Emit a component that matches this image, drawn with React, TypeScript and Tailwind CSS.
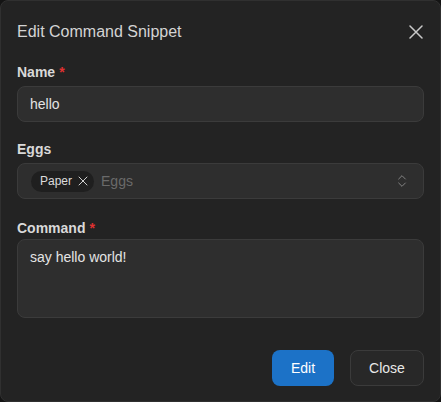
import * as React from "react";
import { X, ChevronsUpDown } from "lucide-react";

const font = { fontFamily: '"Liberation Sans", Arial, sans-serif' };

function Label({ text, required }: { text: string; required?: boolean }) {
  return (
    <label className="block text-[14px] font-bold leading-[18px] text-[#d9d9d9]">
      {text}
      {required && <span className="ml-1 text-[#e03131]">*</span>}
    </label>
  );
}

// thin close glyph used in the header
function CloseIcon() {
  return (
    <svg width="14" height="14" viewBox="0 0 14 14" fill="none" stroke="currentColor" strokeWidth="1.5" strokeLinecap="round">
      <path d="M1 1L13 13M13 1L1 13" />
    </svg>
  );
}

export default function App() {
  const [name, setName] = React.useState("hello");
  const [command, setCommand] = React.useState("say hello world!");
  const [eggs, setEggs] = React.useState<string[]>(["Paper"]);

  return (
    <div className="h-[402px] w-[441px] bg-[#141414]" style={font}>
      <div className="flex h-full w-full flex-col rounded-lg border border-[#303030] bg-[#232323] px-4">
        {/* header */}
        <div className="flex h-[62px] items-center justify-between">
          <h2 className="text-[16px] leading-5 text-[#d4d4d4]">Edit Command Snippet</h2>
          <button className="mr-[1px] text-[#c9c9c9]">
            <CloseIcon />
          </button>
        </div>

        <div className="flex flex-col">
          <div className="flex flex-col gap-[5px]">
            <Label text="Name" required />
            <input
              value={name}
              onChange={(e) => setName(e.target.value)}
              className="h-[36px] w-full rounded-lg border border-[#3b3b3b] bg-[#2e2e2e] px-3 text-[14px] text-[#e4e4e4] outline-none"
            />
          </div>

          <div className="mt-[18px] flex flex-col gap-[5px]">
            <Label text="Eggs" />
            <div className="flex h-[36px] w-full items-center rounded-lg border border-[#3b3b3b] bg-[#2e2e2e] pl-[13px] pr-[12px]">
              <div className="flex items-center gap-[7px]">
                {eggs.map((egg) => (
                  <span
                    key={egg}
                    className="flex h-[21px] items-center gap-[3px] rounded-full bg-[#1f1f1f] pl-[9px] pr-[3px] text-[12px] text-[#dcdcdc]"
                  >
                    {egg}
                    <button className="text-[#d0d0d0]" onClick={() => setEggs(eggs.filter((e) => e !== egg))}>
                      <X className="h-[16px] w-[16px]" strokeWidth={1.5} />
                    </button>
                  </span>
                ))}
                <span className="text-[14px] text-[#6a6a6a]">Eggs</span>
              </div>
              <ChevronsUpDown className="ml-auto mr-[1px] h-[16px] w-[16px] text-[#8a8a8a]" strokeWidth={1.4} />
            </div>
          </div>

          <div className="mt-[20px] flex flex-col gap-[2px]">
            <Label text="Command" required />
            <textarea
              value={command}
              onChange={(e) => setCommand(e.target.value)}
              className="block h-[79px] w-full resize-none rounded-lg border border-[#3b3b3b] bg-[#2e2e2e] px-3 py-[7px] text-[14px] leading-5 text-[#e4e4e4] outline-none"
            />
          </div>
        </div>

        {/* footer */}
        <div className="mt-[32px] flex justify-end gap-4">
          <button className="h-[36px] w-[62px] rounded-lg bg-[#1c72c7] text-[14px] text-white">Edit</button>
          <button className="h-[36px] w-[74px] rounded-lg border border-[#3b3b3b] bg-[#282828] text-[14px] text-[#e8e8e8]">
            Close
          </button>
        </div>
      </div>
    </div>
  );
}
